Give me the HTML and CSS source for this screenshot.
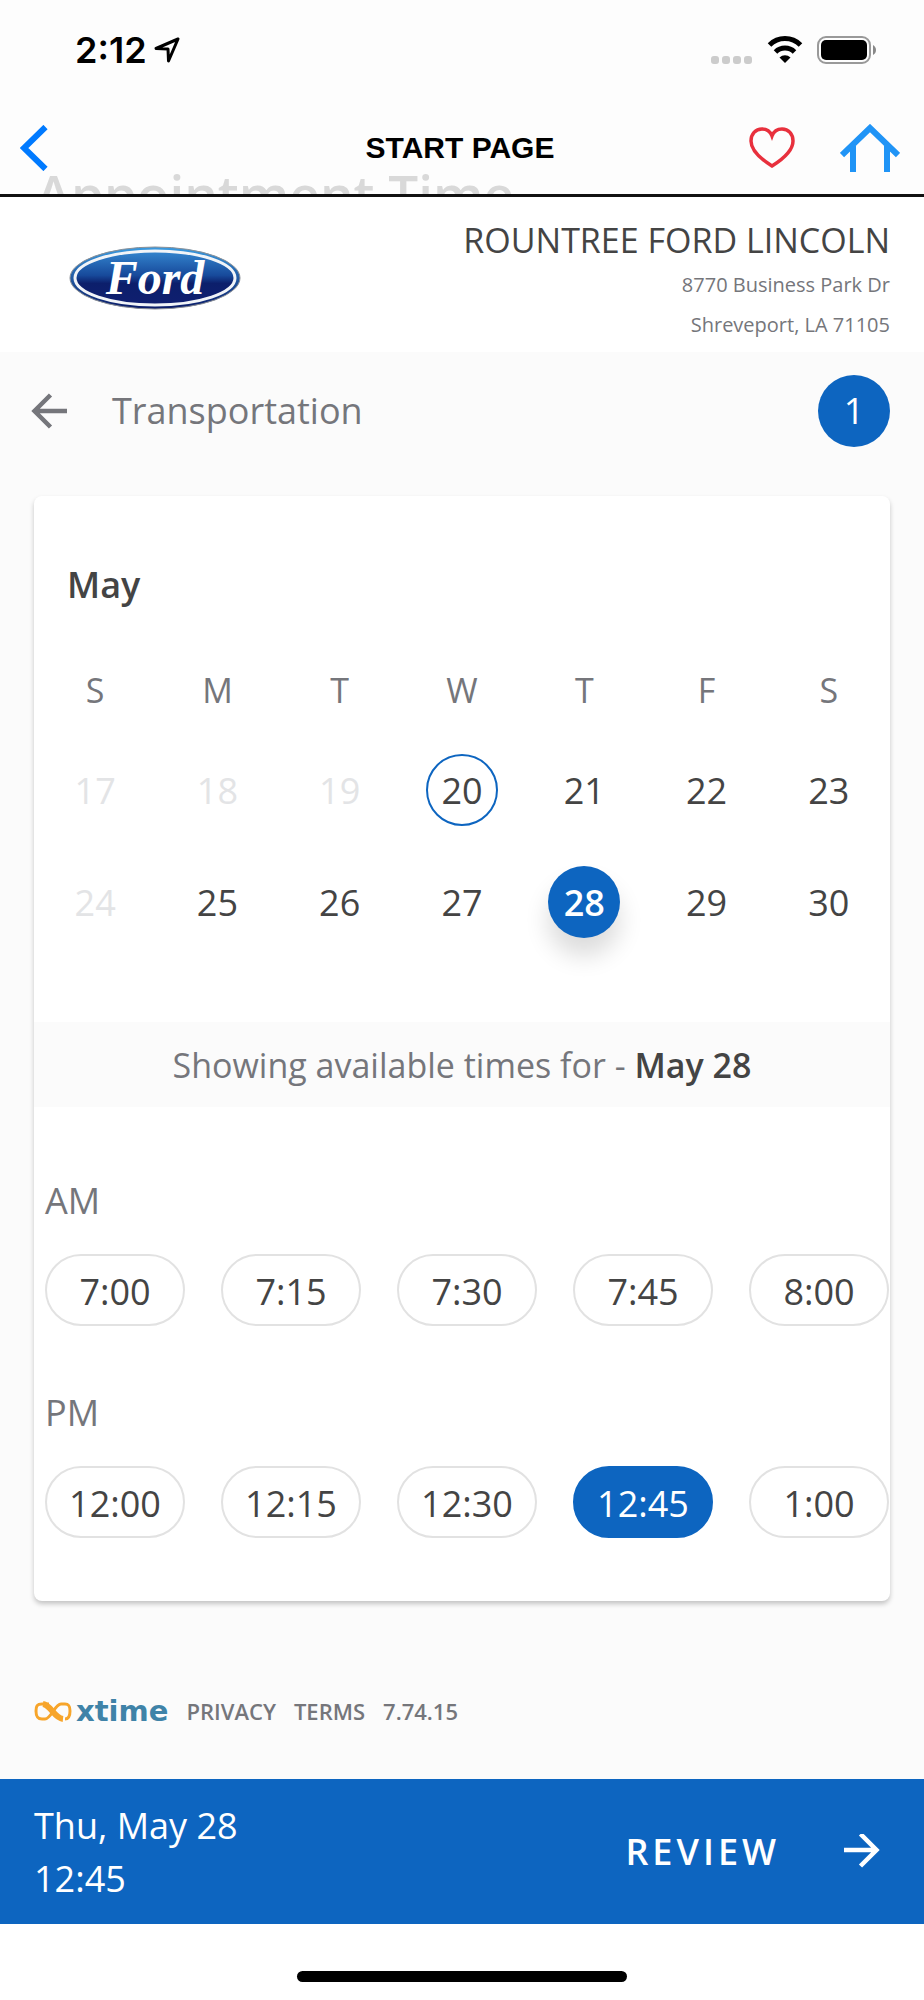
FILE: index.html
```html
<!DOCTYPE html>
<html lang="en">
  <head>
    <meta charset="UTF-8" />
    <meta name="viewport" content="width=device-width, initial-scale=1.0" />
    <title>Appointment Time</title>
    <link rel="stylesheet" href="styles.css">
  </head>
  <body>
    <div class="status-bar">
      <div class="clock">
        <span>2:12</span>
        <svg width="26" height="26" viewBox="0 0 26 26" fill="none" stroke="#000" stroke-width="3" stroke-linejoin="round">
          <path d="M24 2L2 11.500L14 12L14.500 24Z" />
        </svg>
      </div>
      <div class="status-icons">
        <svg width="42" height="28" viewBox="0 0 42 28" fill="#ccc">
          <rect x="0" y="20" width="8" height="8" rx="3" />
          <rect x="11" y="20" width="8" height="8" rx="3" />
          <rect x="22" y="20" width="8" height="8" rx="3" />
          <rect x="33" y="20" width="8" height="8" rx="3" />
        </svg>
        <svg width="36" height="28" viewBox="0 0 36 28">
          <path d="M2.500 9A22 22 0 0 1 33.500 9" fill="none" stroke="#000" stroke-width="5" />
          <path d="M8.500 16A13.500 13.500 0 0 1 27.500 16" fill="none" stroke="#000" stroke-width="5" />
          <path d="M12.500 21.500A8 8 0 0 1 23.500 21.500L18 27Z" />
        </svg>
        <svg width="59" height="28" viewBox="0 0 59 28">
          <rect x="1" y="1" width="52" height="26" rx="8" fill="none" stroke="#999" stroke-width="2" />
          <rect x="4" y="4" width="46" height="20" rx="5" />
          <path d="M56 9C60 11 60 17 56 19Z" fill="#888" />
        </svg>
      </div>
    </div>

    <nav class="nav">
      <div class="ghost-title">Appointment Time</div>
      <button class="icon-btn" aria-label="Back">
        <svg width="28" height="46" viewBox="0 0 28 46" fill="none" stroke="#007aff" stroke-width="6">
          <path d="M25.500 2L4 23L25.500 44" />
        </svg>
      </button>
      <h1>START PAGE</h1>
      <div class="nav-actions">
        <button class="icon-btn" aria-label="Favorite">
          <svg width="46" height="42" viewBox="0 0 46 42" fill="none" stroke="#e8303d" stroke-width="3.500">
            <path d="M23 39C15 34 2 25 2 14C2 7 6.500 2 13 2C18 2 21.500 5 23 9C24.500 5 28 2 33 2C39.500 2 44 7 44 14C44 25 31 34 23 39Z" />
          </svg>
        </button>
        <button class="icon-btn" aria-label="Home">
          <svg width="60" height="48" viewBox="0 0 60 48" fill="none" stroke="#2094f6" stroke-width="6">
            <path d="M2 31L30 4L58 31M13 22V48M47 22V48" />
          </svg>
        </button>
      </div>
    </nav>

    <header class="dealer">
      <svg class="ford" width="174" height="66" viewBox="0 0 174 66" role="img" aria-label="Ford">
        <defs>
          <linearGradient id="rim" x1="0" y1="0" x2="0" y2="1">
            <stop offset="0" stop-color="#3b9be0" />
            <stop offset="1" stop-color="#0a1a66" />
          </linearGradient>
          <linearGradient id="oval" x1="0" y1="0" x2="0" y2="1">
            <stop offset="0" stop-color="#3486cf" />
            <stop offset="0.450" stop-color="#174a9b" />
            <stop offset="0.600" stop-color="#0c1f6b" />
            <stop offset="1" stop-color="#101f70" />
          </linearGradient>
        </defs>
        <ellipse cx="87" cy="33" rx="85" ry="31" fill="url(#rim)" stroke="#8c9096" />
        <ellipse cx="87" cy="33" rx="80" ry="27" fill="url(#oval)" stroke="#f1f4f8" stroke-width="3" />
        <text class="ford-text" x="87" y="49" text-anchor="middle">Ford</text>
      </svg>
      <div class="dealer-info">
        <h2>ROUNTREE FORD LINCOLN</h2>
        <p>8770 Business Park Dr</p>
        <p>Shreveport, LA 71105</p>
      </div>
    </header>

    <main>
      <div class="step">
        <button class="icon-btn" aria-label="Go back">
          <svg width="36" height="36" viewBox="0 0 36 36" fill="none" stroke="#75767b" stroke-width="4.500">
            <path d="M36 18H4M19.500 2L3.500 18L19.500 34" />
          </svg>
        </button>
        <span class="step-name">Transportation</span>
        <span class="step-count">1</span>
      </div>

      <section class="card">
        <h3>May</h3>
        <table class="calendar">
          <thead>
            <tr><th>S</th><th>M</th><th>T</th><th>W</th><th>T</th><th>F</th><th>S</th></tr>
          </thead>
          <tbody>
            <tr>
              <td><button class="day" disabled>17</button></td>
              <td><button class="day" disabled>18</button></td>
              <td><button class="day" disabled>19</button></td>
              <td><button class="day today">20</button></td>
              <td><button class="day">21</button></td>
              <td><button class="day">22</button></td>
              <td><button class="day">23</button></td>
            </tr>
            <tr>
              <td><button class="day" disabled>24</button></td>
              <td><button class="day">25</button></td>
              <td><button class="day">26</button></td>
              <td><button class="day">27</button></td>
              <td><button class="day selected">28</button></td>
              <td><button class="day">29</button></td>
              <td><button class="day">30</button></td>
            </tr>
          </tbody>
        </table>

        <p class="showing">Showing available times for - <strong>May 28</strong></p>

        <div class="times">
          <h4>AM</h4>
          <div class="slots">
            <button class="slot">7:00</button>
            <button class="slot">7:15</button>
            <button class="slot">7:30</button>
            <button class="slot">7:45</button>
            <button class="slot">8:00</button>
          </div>
          <h4>PM</h4>
          <div class="slots">
            <button class="slot">12:00</button>
            <button class="slot">12:15</button>
            <button class="slot">12:30</button>
            <button class="slot selected">12:45</button>
            <button class="slot">1:00</button>
          </div>
        </div>
      </section>

      <footer class="footer">
        <div class="xtime">
          <svg width="38" height="22" viewBox="0 0 38 22" fill="none" stroke="#f7a52b">
            <path d="M15 4H8C3 4 2 6 2 11S3 19 8 19H11C17 19 21 4 27 4H31C35 4 36 6 36 11S35 19 31 19" stroke-width="3" />
            <path d="M9 4C17 5 20 18 29 19" stroke-width="6" />
          </svg>
          <span>xtime</span>
        </div>
        <a href="#">PRIVACY</a>
        <a href="#">TERMS</a>
        <span>7.74.15</span>
      </footer>
    </main>

    <div class="review-bar">
      <div class="summary">Thu, May 28<br>12:45</div>
      <button class="review">
        <span>REVIEW</span>
        <svg width="36" height="36" viewBox="0 0 36 36" fill="none" stroke="#fff" stroke-width="4.500">
          <path d="M0 16H32M16.500 0L32.500 16L16.500 32" />
        </svg>
      </button>
    </div>

    <div class="home-indicator"><span></span></div>
  </body>
</html>
```
FILE: styles.css
```css
* {
  box-sizing: border-box;
  margin: 0;
  padding: 0;
}
body {
  background-color: #fbfbfb;
  color: #444;
  font-family: "Open Sans", sans-serif;
  font-size: 36px;
  line-height: 48px;
}
svg {
  display: block;
}
button {
  background: none;
  border: none;
  color: inherit;
  font: inherit;
  cursor: pointer;
}

/* phone status bar */
.status-bar {
  display: flex;
  justify-content: space-between;
  align-items: center;
  height: 100px;
  padding: 0 48px 0 75px;
  background-color: #fdfdfd;
}
.clock {
  display: flex;
  align-items: center;
  gap: 7px;
  color: #000;
  font-family: Inter, sans-serif;
  font-size: 36px;
  font-weight: 600;
}
.status-icons {
  display: flex;
  gap: 14px;
}

/* app navigation */
.nav {
  position: relative;
  display: grid;
  grid-template-columns: 1fr auto 1fr;
  align-items: center;
  height: 97px;
  padding: 2px 24px 0 20px;
  background-color: #fdfdfd;
  border-bottom: 3px solid #111;
}
.nav h1 {
  color: #000;
  font-family: "Liberation Sans", Arial, sans-serif;
  font-size: 30px;
}
.nav .icon-btn {
  justify-self: start;
}
.nav-actions {
  display: flex;
  justify-content: flex-end;
  align-items: center;
  gap: 45px;
}
/* page title scrolling away under the bar */
.ghost-title {
  position: absolute;
  left: 36px;
  bottom: 0;
  height: 24px;
  overflow: hidden;
  color: #d9d9d9;
  font-size: 53px;
  font-weight: 600;
  line-height: 48px;
}

.dealer {
  display: flex;
  justify-content: space-between;
  align-items: flex-start;
  padding: 20px 34px 7px 68px;
  background-color: #fff;
}
.ford {
  margin-top: 28px;
}
.ford-text {
  fill: #fff;
  font-family: "Liberation Serif", serif;
  font-size: 48px;
  font-style: italic;
  font-weight: bold;
}
.dealer-info {
  text-align: right;
}
.dealer-info h2 {
  margin-bottom: 2px;
  font-size: 34px;
  font-weight: 400;
  line-height: 46px;
}
.dealer-info p {
  color: #75767b;
  font-size: 20px;
  line-height: 40px;
}

.step {
  display: flex;
  align-items: center;
  padding: 23px 34px 49px 31px;
  color: #75767b;
}
.step-name {
  flex: 1;
  margin-left: 45px;
}
.step-count {
  width: 72px;
  height: 72px;
  border-radius: 50%;
  background-color: #0d65c0;
  color: #fff;
  line-height: 72px;
  text-align: center;
}

.card {
  margin: 0 34px;
  padding-top: 65px;
  overflow: hidden;
  background-color: #fff;
  border-radius: 8px;
  box-shadow: 0 3px 5px rgba(0, 0, 0, 0.22);
}
.card h3 {
  margin: 0 33px 37px;
  font-size: 36px;
  font-weight: 600;
}
.calendar {
  width: 100%;
  margin-bottom: 64px;
  border-collapse: collapse;
  table-layout: fixed;
  text-align: center;
}
.calendar th {
  height: 88px;
  color: #75767b;
  font-size: 34px;
  font-weight: 400;
}
.calendar td {
  height: 112px;
}
.day {
  display: block;
  width: 72px;
  height: 72px;
  margin: 0 auto;
  padding-top: 2px;
  border-radius: 50%;
}
.day:disabled {
  color: #e3e4e6;
}
.day.today {
  border: 2px solid #0d65c0;
}
.day.selected {
  background-color: #0d65c0;
  box-shadow: 0 18px 24px rgba(0, 0, 0, 0.14);
  color: #fff;
  font-weight: 600;
}
.showing {
  padding: 19px 0 18px;
  background-color: #fbfbfb;
  color: #75767b;
  font-size: 34px;
  text-align: center;
}
.showing strong {
  color: #444;
  font-weight: 600;
}

.times {
  padding: 70px 0 0 11px;
}
.times h4 {
  margin-bottom: 29px;
  color: #75767b;
  font-size: 36px;
  font-weight: 400;
}
.slots {
  display: flex;
  gap: 36px;
  margin-bottom: 63px;
}
.slot {
  flex: none;
  width: 140px;
  height: 72px;
  padding-top: 4px;
  border: 2px solid #e2e2e2;
  border-radius: 36px;
}
.slot.selected {
  background-color: #0d65c0;
  border-color: #0d65c0;
  color: #fff;
}

.footer {
  display: flex;
  align-items: center;
  gap: 18px;
  padding: 95px 34px 53px;
  color: #75767b;
  font-size: 22px;
  font-weight: 600;
  line-height: 30px;
}
.footer a {
  color: inherit;
  text-decoration: none;
}
.xtime {
  display: flex;
  align-items: center;
  gap: 4px;
  color: #3f83a8;
  font-family: "DejaVu Sans", sans-serif;
  font-size: 29px;
  font-weight: bold;
}

.review-bar {
  display: flex;
  justify-content: space-between;
  align-items: center;
  padding: 20px 44px 19px 34px;
  background-color: #0d65c0;
  color: #fff;
}
.summary {
  line-height: 53px;
}
.review {
  display: flex;
  align-items: center;
  gap: 64px;
  font-weight: 600;
  letter-spacing: 4px;
}

.home-indicator {
  display: flex;
  justify-content: center;
  padding: 47px 0 18px;
  background-color: #fff;
}
.home-indicator span {
  width: 330px;
  height: 11px;
  border-radius: 6px;
  background-color: #000;
}
```
